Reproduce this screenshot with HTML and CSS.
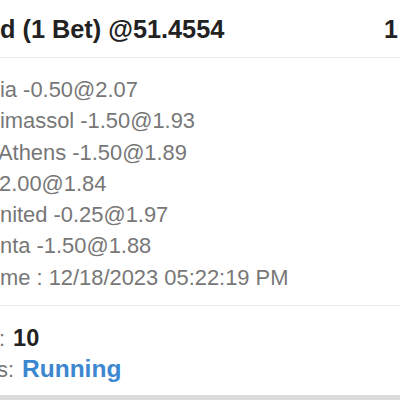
FILE: index.html
```html
<!DOCTYPE html>
<html>
<head>
<meta charset="utf-8">
<link rel="stylesheet" href="styles.css">
</head>
<body>
<div class="page">
  <div class="card">
    <div class="header">
      <span class="title">d (1 Bet) @51.4554</span>
      <span class="amount">1</span>
    </div>
    <div class="legs">
      <div class="line">ia -0.50@2.07</div>
      <div class="line">imassol -1.50@1.93</div>
      <div class="line shift-2">Athens -1.50@1.89</div>
      <div class="line shift-1">2.00@1.84</div>
      <div class="line">nited -0.25@1.97</div>
      <div class="line">nta -1.50@1.88</div>
      <div class="line">me : 12/18/2023 05:22:19 PM</div>
    </div>
    <div class="footer">
      <div class="row"><span class="label shift-1">:</span><span class="stake">10</span></div>
      <div class="row"><span class="label shift-3">s:</span><span class="status">Running</span></div>
    </div>
  </div>
</div>
</body>
</html>
```

FILE: styles.css
```css
html, body {
  margin: 0;
  padding: 0;
  background: #dcdcdc;
}
body {
  font-family: "Liberation Sans", Arial, Helvetica, sans-serif;
  width: 400px;
  height: 400px;
  overflow: hidden;
}
.page {
  overflow: hidden;
}
.card {
  background: #fff;
  height: 395px;
  display: flex;
  flex-direction: column;
  overflow: hidden;
}
.header {
  height: 58px;
  border-bottom: 1px solid #ececec;
  display: flex;
  align-items: center;
  justify-content: space-between;
  box-sizing: border-box;
  padding-top: 2px;
}
.title {
  font-size: 25.3px;
  font-weight: bold;
  color: #222;
  white-space: nowrap;
}
.amount {
  font-size: 25px;
  font-weight: bold;
  color: #222;
  margin-right: 2px;
}
.legs {
  padding: 16px 0 12px 0;
  border-bottom: 1px solid #ececec;
}
.line {
  font-size: 21.9px;
  line-height: 31.3px;
  color: #777;
  white-space: nowrap;
}
.shift-1 { margin-left: -1px; }
.shift-2 { margin-left: -2px; }
.shift-3 { margin-left: -3px; }
.footer {
  padding: 17px 0 0 0;
}
.row {
  display: flex;
  align-items: baseline;
  line-height: 30px;
  white-space: nowrap;
}
.label {
  font-size: 21.9px;
  color: #777;
  margin-right: 8px;
}
.stake {
  font-size: 23.5px;
  font-weight: bold;
  color: #222;
}
.status {
  font-size: 24.5px;
  font-weight: bold;
  color: #3d87d0;
}
```
